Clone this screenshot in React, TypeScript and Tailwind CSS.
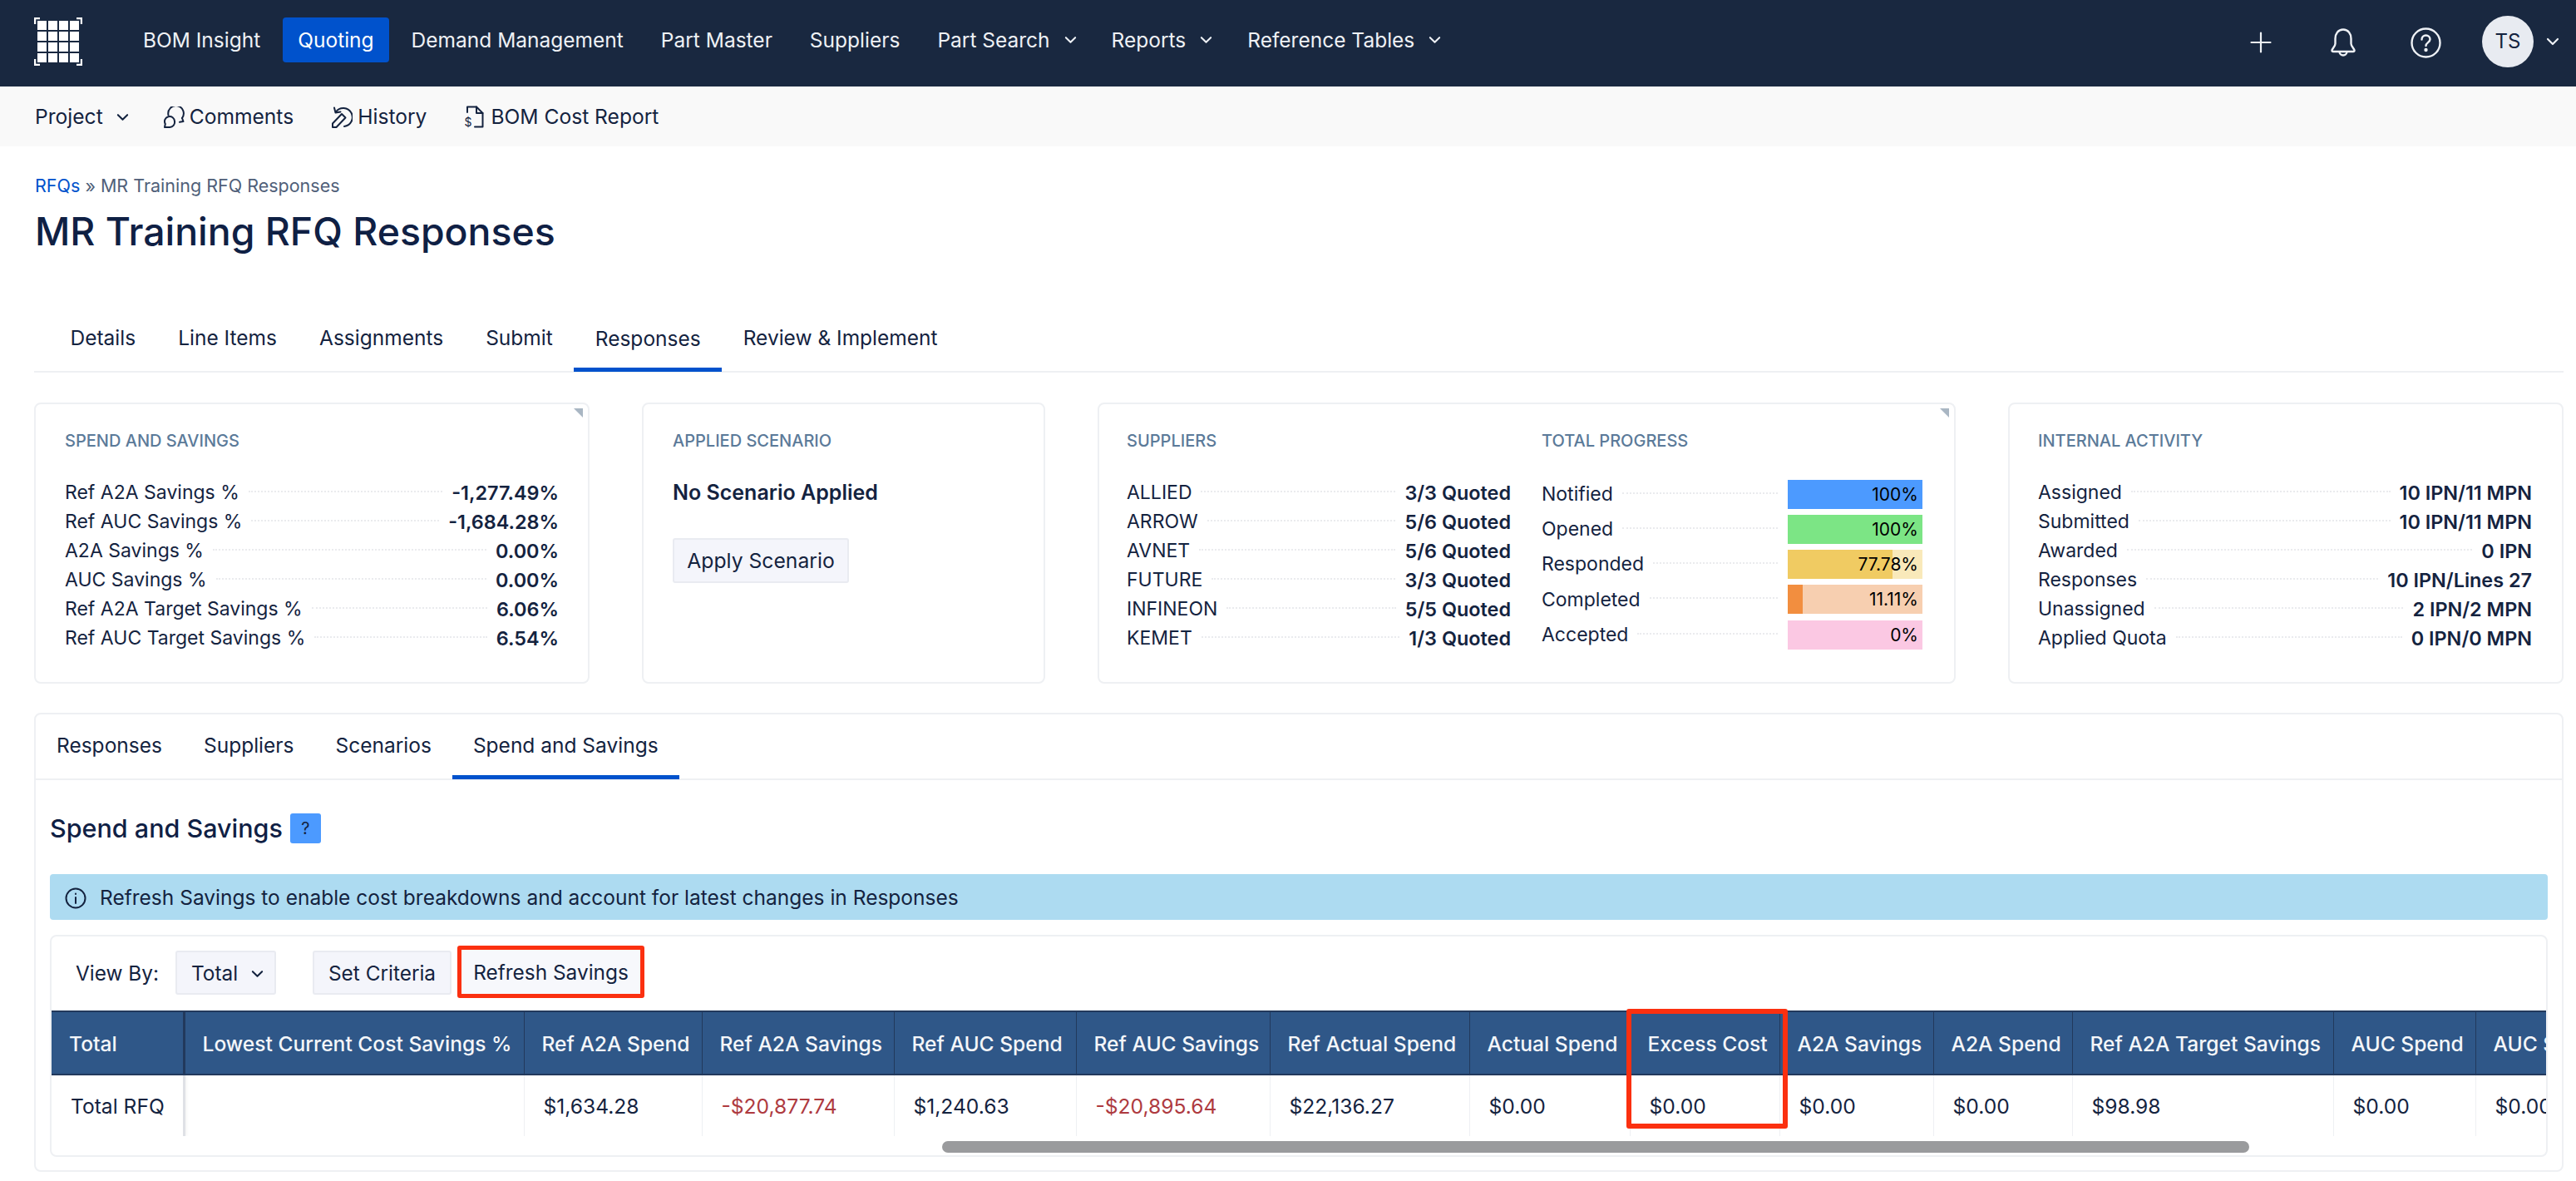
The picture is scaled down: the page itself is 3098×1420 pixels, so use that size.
import React from "react";

const font = { fontFamily: "Inter, sans-serif" };

function Chevron({ className = "" }: { className?: string }) {
  return (
    <svg viewBox="0 0 16 10" className={`shrink-0 ${className}`} fill="none" stroke="currentColor" strokeWidth="2.2" strokeLinecap="round" strokeLinejoin="round">
      <path d="M2 2l6 6 6-6" />
    </svg>
  );
}

function Logo() {
  const cells = Array.from({ length: 16 });
  return (
    <div className="relative w-[58px] h-[58px] shrink-0 flex items-center justify-center">
      <div className="grid grid-cols-4 gap-[2px]">
        {cells.map((_, i) => (
          <div key={i} className="w-[11px] h-[11px] bg-white" />
        ))}
      </div>
      <svg viewBox="0 0 58 58" className="absolute inset-0 w-[58px] h-[58px]" fill="none" stroke="#fff" strokeWidth="2.4">
        <path d="M7 1H1v7M51 1h6v7M7 57H1v-7M51 57h6v-7" />
      </svg>
    </div>
  );
}

function NavItem({ label, active, menu }: { label: string; active?: boolean; menu?: boolean }) {
  return (
    <div className={`h-[54px] pl-[18px] flex items-center gap-[17px] rounded-[4px] text-[24.5px] ${menu ? "pr-[15px]" : "pr-[18px]"} ${active ? "bg-[#0052cc] text-white" : "text-[#eef1f5]"}`}>
      <span>{label}</span>
      {menu && <Chevron className="w-[15px] h-[10px]" />}
    </div>
  );
}

function Dotted() {
  return <div className="flex-1 mx-[11px] -mt-[3px] border-t-2 border-dotted border-[#eaebee]" />;
}

function Row({ label, value }: { label: string; value: string }) {
  return (
    <div className="h-[35px] flex items-center text-[23.4px] text-[#14233f]">
      <span className="text-[23px]">{label}</span>
      <Dotted />
      <span className="font-semibold">{value}</span>
    </div>
  );
}

function Card({ className = "", heading, corner, children }: { className?: string; heading?: string; corner?: boolean; children: React.ReactNode }) {
  return (
    <div className={`relative h-[338px] border-2 border-[#eef0f3] rounded-[8px] pt-[32px] ${className}`}>
      {corner && (
        <div className="absolute top-[5px] right-[6px] w-[11px] h-[11px] bg-[#a9b6c3] [clip-path:polygon(0_0,100%_0,100%_100%)]" />
      )}
      {heading && <div className="text-[20px] leading-[24px] font-medium text-[#5b7a99] uppercase">{heading}</div>}
      {children}
    </div>
  );
}

function Bar({ label, pct, fill, track, text }: { label: string; pct: number; fill: string; track: string; text: string }) {
  return (
    <div className="h-[36px] mb-[6.3px] flex items-center text-[23px] text-[#14233f]">
      <span>{label}</span>
      <div className="flex-1 ml-[11px] mr-[12px] -mt-[3px] border-t-2 border-dotted border-[#eaebee]" />
      <div className={`relative w-[162px] h-[35px] ${track}`}>
        <div className={`h-full ${fill}`} style={{ width: `${pct}%` }} />
        <span className="absolute right-[5px] top-0 leading-[35px] text-[21px] text-black">{text}</span>
      </div>
    </div>
  );
}

const columns: { h: string; w: number; v: string; red?: boolean }[] = [
  { h: "Lowest Current Cost Savings %", w: 409, v: "" },
  { h: "Ref A2A Spend", w: 214, v: "$1,634.28" },
  { h: "Ref A2A Savings", w: 231, v: "-$20,877.74", red: true },
  { h: "Ref AUC Spend", w: 219, v: "$1,240.63" },
  { h: "Ref AUC Savings", w: 233, v: "-$20,895.64", red: true },
  { h: "Ref Actual Spend", w: 240, v: "$22,136.27" },
  { h: "Actual Spend", w: 193, v: "$0.00" },
  { h: "Excess Cost", w: 180, v: "$0.00" },
  { h: "A2A Savings", w: 185, v: "$0.00" },
  { h: "A2A Spend", w: 167, v: "$0.00" },
  { h: "Ref A2A Target Savings", w: 314, v: "$98.98" },
  { h: "AUC Spend", w: 171, v: "$0.00" },
  { h: "AUC Savings", w: 180, v: "$0.00" },
];

export default function App() {
  return (
    <div style={font} className="w-[3098px] h-[1420px] overflow-hidden bg-white text-[#14233f]">
      <header className="h-[104px] bg-[#192840] flex items-start pt-[21px] pl-[41px] pr-[20px]">
        <Logo />
        <nav className="ml-[55px] flex gap-[9px]">
          <NavItem label="BOM Insight" />
          <NavItem label="Quoting" active />
          <NavItem label="Demand Management" />
          <NavItem label="Part Master" />
          <NavItem label="Suppliers" />
          <NavItem label="Part Search" menu />
          <NavItem label="Reports" menu />
          <NavItem label="Reference Tables" menu />
        </nav>
        <div className="ml-auto flex items-center -mt-[2px] h-[62px] text-[#eef1f5]">
          <svg viewBox="0 0 26 26" className="w-[26px] h-[26px] mt-[2px] shrink-0" fill="none" stroke="currentColor" strokeWidth="2.2" strokeLinecap="round"><path d="M13 1.500v23M1.500 13h23" /></svg>
          <svg viewBox="0 0 30 34" className="ml-[71px] w-[30px] h-[34px] mt-[1px] shrink-0" fill="none" stroke="currentColor" strokeWidth="2.4" strokeLinejoin="round">
            <path d="M15 1.500c-6 0-9.500 5-9.500 11v6c0 3-3.500 5.500-4 8-.2 1 .5 1.500 1.500 1.500h24c1 0 1.700-.5 1.500-1.500-.5-2.500-4-5-4-8v-6c0-6-3.500-11-9.500-11z" />
            <path d="M10.500 28a4.500 4.500 0 0 0 9 0" />
          </svg>
          <svg viewBox="0 0 37 37" className="ml-[66px] w-[37px] h-[37px] mt-[2px] shrink-0" fill="none" stroke="currentColor" strokeWidth="2.4" strokeLinecap="round"><circle cx="18.500" cy="18.500" r="17" /><path d="M13.500 14.500c0-2.800 2.200-5 5-5s5 2.200 5 4.800c0 3.700-5 4-5 7.700" /><circle cx="18.500" cy="27" r="1" fill="currentColor" /></svg>
          <div className="ml-[49px] w-[62px] h-[62px] shrink-0 rounded-full bg-[#e8ebf1] flex items-center justify-center text-[24px] text-[#14233f]">TS</div>
          <Chevron className="ml-[15px] w-[16px] h-[10px]" />
        </div>
      </header>

      <div className="h-[72px] bg-[#f9f9f9] pl-[42px] pt-[1px] flex items-center text-[24.6px] text-[#14233f]">
        <span>Project</span>
        <Chevron className="ml-[16px] w-[15px] h-[10px]" />
        <svg viewBox="0 0 25 26" className="ml-[42px] w-[25px] h-[26px] shrink-0" fill="none" stroke="currentColor" strokeWidth="2" strokeLinecap="round" strokeLinejoin="round">
          <path d="M5.500 10.500A9.300 9.300 0 1 1 22 14" />
          <path d="M22 14l1.500 4-4.500.8" />
          <path d="M13 18a6 6 0 1 0-11.200 3L1 25h6a6 6 0 0 0 6-7z" />
        </svg>
        <span className="ml-[6px]">Comments</span>
        <svg viewBox="0 0 25 26" className="ml-[46px] w-[25px] h-[26px] shrink-0" fill="none" stroke="currentColor" strokeWidth="2" strokeLinecap="round" strokeLinejoin="round">
          <path d="M5 6.500A11 11 0 1 1 15 24" />
          <path d="M3 1.500L4.500 7.500 10.500 6.500" />
          <path d="M1 25v-4.500L12 9l4.500 4.500L5.500 25z" />
        </svg>
        <span className="ml-[6px]">History</span>
        <svg viewBox="0 0 24 27" className="ml-[45px] w-[24px] h-[27px] shrink-0" fill="none" stroke="currentColor" strokeWidth="2" strokeLinecap="round" strokeLinejoin="round">
          <path d="M4 8V1.500h11L22.500 9v16.500H13" />
          <path d="M15 1.500V9h7.500" />
          <text x="0.500" y="24.500" fontSize="14" stroke="none" fill="currentColor" fontFamily="Inter">$</text>
        </svg>
        <span className="ml-[8px]">BOM Cost Report</span>
      </div>

      <main className="pl-[41px] pr-[15px]">
        <div className="pt-[35px] pl-[1px] h-[74px] text-[21.5px] leading-[24px] text-[#505f79]">
          <span className="text-[#0052cc]">RFQs</span> » MR Training RFQ Responses
        </div>
        <h1 className="pl-[1px] text-[46.4px] leading-[56px] font-medium text-[#0f2044]">MR Training RFQ Responses</h1>

        <div className="mt-[43px] h-[99px] border-b-2 border-[#eef0f3] flex items-end pl-[18px]">
          {["Details", "Line Items", "Assignments", "Submit", "Responses", "Review & Implement"].map((t) => (
            <div key={t} className={`h-[72px] px-[25.5px] pt-[16px] text-[24.5px] leading-[32px] text-[#14233f] ${t === "Responses" ? "border-b-[5px] border-[#0052cc] -mb-[1px]" : ""}`}>{t}</div>
          ))}
        </div>

        <div className="mt-[36px] flex gap-[63px]">
          <Card className="w-[668px] pl-[35px] pr-[35px]" heading="Spend and Savings" corner>
            <div className="mt-[33px]">
              <Row label="Ref A2A Savings %" value="-1,277.49%" />
              <Row label="Ref AUC Savings %" value="-1,684.28%" />
              <Row label="A2A Savings %" value="0.00%" />
              <Row label="AUC Savings %" value="0.00%" />
              <Row label="Ref A2A Target Savings %" value="6.06%" />
              <Row label="Ref AUC Target Savings %" value="6.54%" />
            </div>
          </Card>
          <Card className="w-[485px] pl-[35px]" heading="Applied Scenario">
            <div className="mt-[33px] text-[25px] leading-[34px] font-semibold text-[#14233f]">No Scenario Applied</div>
            <button className="mt-[38px] h-[54px] w-[212px] pt-[2px] bg-[#f4f5fb] border-2 border-[#e9ebf1] rounded-[3px] text-[24.7px]">Apply Scenario</button>
          </Card>
          <Card className="w-[1032px] pl-[33px] pr-[38px] flex gap-[37px]" corner>
            <div className="w-[462px]">
              <div className="text-[20px] leading-[24px] font-medium text-[#5b7a99] uppercase">Suppliers</div>
              <div className="mt-[33px]">
                <Row label="ALLIED" value="3/3 Quoted" />
                <Row label="ARROW" value="5/6 Quoted" />
                <Row label="AVNET" value="5/6 Quoted" />
                <Row label="FUTURE" value="3/3 Quoted" />
                <Row label="INFINEON" value="5/5 Quoted" />
                <Row label="KEMET" value="1/3 Quoted" />
              </div>
            </div>
            <div className="flex-1">
              <div className="text-[20px] leading-[24px] font-medium text-[#5b7a99] uppercase">Total Progress</div>
              <div className="mt-[34px]">
                <Bar label="Notified" pct={100} fill="bg-[#4c9aff]" track="bg-[#4c9aff]" text="100%" />
                <Bar label="Opened" pct={100} fill="bg-[#7ce585]" track="bg-[#7ce585]" text="100%" />
                <Bar label="Responded" pct={77.78} fill="bg-[#f0cb62]" track="bg-[#f9e9ba]" text="77.78%" />
                <Bar label="Completed" pct={11.11} fill="bg-[#f28e3f]" track="bg-[#f7cfb0]" text="11.11%" />
                <Bar label="Accepted" pct={0} fill="bg-[#fbc8e3]" track="bg-[#fbc8e3]" text="0%" />
              </div>
            </div>
          </Card>
          <Card className="w-[668px] pl-[34px] pr-[36px]" heading="Internal Activity">
            <div className="mt-[33px]">
              <Row label="Assigned" value="10 IPN/11 MPN" />
              <Row label="Submitted" value="10 IPN/11 MPN" />
              <Row label="Awarded" value="0 IPN" />
              <Row label="Responses" value="10 IPN/Lines 27" />
              <Row label="Unassigned" value="2 IPN/2 MPN" />
              <Row label="Applied Quota" value="0 IPN/0 MPN" />
            </div>
          </Card>
        </div>

        <section className="mt-[35px] h-[552px] border-2 border-[#eef0f3] rounded-[8px] overflow-hidden">
          <div className="h-[79px] border-b-2 border-[#eef0f3] flex">
            {["Responses", "Suppliers", "Scenarios", "Spend and Savings"].map((t) => (
              <div key={t} className={`h-[78px] px-[25px] pt-[21px] text-[24.5px] leading-[32px] ${t === "Spend and Savings" ? "border-b-[5px] border-[#0052cc]" : ""}`}>{t}</div>
            ))}
          </div>
          <div className="pl-[17px] pr-[17px]">
            <div className="mt-[40px] flex items-center h-[36px]">
              <h2 className="text-[30.5px] font-medium text-[#0f2044]">Spend and Savings</h2>
              <span className="ml-[9px] w-[37px] h-[36px] rounded-[3px] bg-[#4c9aff] flex items-center justify-center text-[20px] text-[#14233f]">?</span>
            </div>
            <div className="mt-[37px] h-[55px] pt-[2px] bg-[#addbf1] rounded-[4px] flex items-center pl-[18px] text-[24.5px] text-[#14233f]">
              <svg viewBox="0 0 26 26" className="w-[26px] h-[26px] shrink-0" fill="none" stroke="currentColor" strokeWidth="2" strokeLinecap="round"><circle cx="13" cy="13" r="11.500" /><path d="M13 12v7M13 7.500v.5" /></svg>
              <span className="ml-[16px]">Refresh Savings to enable cost breakdowns and account for latest changes in Responses</span>
            </div>
            <div className="mt-[18px] h-[267px] border-2 border-[#eef0f3] rounded-[8px] overflow-hidden">
              <div className="h-[89px] flex items-start pl-[29px] pt-[11px] text-[24.4px]">
                <span className="mt-[15px] w-[120px]">View By:</span>
                <div className="mt-[6px] w-[121px] h-[53px] pt-[2px] bg-[#f4f5fb] border-2 border-[#e9ebf1] rounded-[3px] flex items-center pl-[17px]">
                  Total
                  <Chevron className="ml-[16px] w-[15px] h-[10px]" />
                </div>
                <button className="mt-[6px] ml-[44px] w-[167px] h-[53px] pt-[2px] bg-[#f4f5fb] border-2 border-[#e9ebf1] rounded-[3px]">Set Criteria</button>
                <button className="ml-[7px] w-[225px] h-[63px] pt-[2px] border-[5px] border-[#fb3010] rounded-[3px] bg-[#f7f8fc]">Refresh Savings</button>
              </div>
              <div className="relative h-[151px]">
                <div className="overflow-hidden h-[151px]">
                  <table className="table-fixed border-collapse text-[24.6px]" style={{ width: 159 + columns.reduce((s, c) => s + c.w, 0) }}>
                    <thead>
                      <tr className="h-[76px] bg-[#2f5788] text-[#f4f6f9] border-t-2 border-b-2 border-[#22395c]">
                        <th className="w-[159px] pl-[21px] pt-[2px] text-left font-medium border-r-[3px] border-[#22395c]">Total</th>
                        {columns.map((c) => (
                          <th key={c.h} style={{ width: c.w }} className="pl-[21px] pt-[2px] text-left font-medium whitespace-nowrap border-r border-[#22395c]">{c.h}</th>
                        ))}
                      </tr>
                    </thead>
                    <tbody>
                      <tr className="h-[75px] border-b-[3px] border-[#eef0f3]">
                        <td className="pl-[23px] pt-[2px] border-r-[3px] border-[#dfe1e6] shadow-[3px_0_4px_rgba(0,0,0,0.06)]">Total RFQ</td>
                        {columns.map((c) => (
                          <td key={c.h} className={`pl-[23px] pt-[2px] whitespace-nowrap border-r border-[#eef0f3] ${c.red ? "text-[#ae3a3f]" : ""}`}>{c.v}</td>
                        ))}
                      </tr>
                    </tbody>
                  </table>
                </div>
                <div className="absolute left-[1894px] top-[-2px] w-[194px] h-[144px] border-[6px] border-[#fb3010] rounded-[3px]" />
              </div>
              <div className="h-[23px] pt-[6px] pl-[1071px]">
                <div className="w-[1572px] h-[14px] rounded-full bg-[#9a9b9d]" />
              </div>
            </div>
          </div>
        </section>
      </main>
    </div>
  );
}
